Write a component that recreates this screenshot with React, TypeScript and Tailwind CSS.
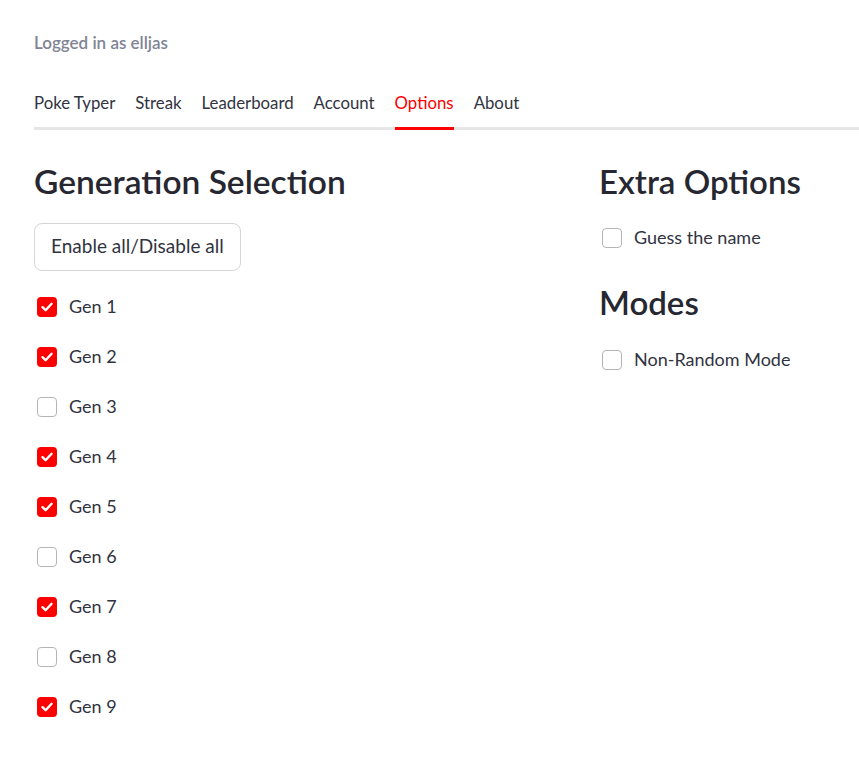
import React, { useState } from "react";

const tabs = ["Poke Typer", "Streak", "Leaderboard", "Account", "Options", "About"];

// Checkbox row in the Streamlit look
const Check: React.FC<{ label: string; checked: boolean; onToggle: () => void }> = ({
  label,
  checked,
  onToggle,
}) => (
  <label className="flex h-[50px] cursor-pointer items-center" onClick={onToggle}>
    <span
      className={
        checked
          ? "ml-[3px] flex h-5 w-5 items-center justify-center rounded-[4px] bg-[#ff0000]"
          : "ml-[3px] flex h-5 w-5 items-center justify-center rounded-[4px] border border-[#b5b5b5] bg-white"
      }
    >
      {checked && (
        <svg width="14" height="14" viewBox="0 0 14 14" fill="none">
          <path d="M2.5 7.2 5.6 10.2 11.6 3.8" stroke="white" strokeWidth="2.4" strokeLinecap="round" strokeLinejoin="round" />
        </svg>
      )}
    </span>
    <span className="ml-3 text-[18px] text-[#31333f]">{label}</span>
  </label>
);

export default function App() {
  const [gens, setGens] = useState([true, true, false, true, true, false, true, false, true]);
  const [guess, setGuess] = useState(false);
  const [nonRandom, setNonRandom] = useState(false);

  const toggleGen = (i: number) => setGens(gens.map((g, j) => (j === i ? !g : g)));
  const toggleAll = () => {
    const all = gens.every((g) => g);
    setGens(gens.map(() => !all));
  };

  return (
    <div className="min-h-screen overflow-hidden bg-white pl-[34px] pt-[30px]" style={{ fontFamily: "Lato, 'Noto Sans', sans-serif" }}>
      <p className="text-[17px] font-semibold text-[#808495]">Logged in as elljas</p>

      {/* tab bar */}
      <div className="mt-[34px] flex gap-5 border-b-[3px] border-[#e6e6e6]">
        {tabs.map((t) => (
          <div
            key={t}
            className={
              t === "Options"
                ? "-mb-[3px] border-b-[3px] border-[#ff0000] pb-[12px] text-[16.8px] text-[#ff0000]"
                : "-mb-[3px] border-b-[3px] border-transparent pb-[12px] text-[16.8px] text-[#31333f]"
            }
          >
            {t}
          </div>
        ))}
      </div>

      <div className="flex">
        <div className="w-[565px]">
          <h2 className="mt-[31px] text-[33.5px] font-semibold leading-[40px] text-[#262730]">Generation Selection</h2>
          <button
            onClick={toggleAll}
            className="mt-[22px] h-[48px] rounded-[8px] border border-[#d6d6d9] bg-white px-4 text-[19px] text-[#31333f]"
          >
            Enable all/Disable all
          </button>
          <div className="mt-[11px]">
            {gens.map((g, i) => (
              <Check key={i} label={`Gen ${i + 1}`} checked={g} onToggle={() => toggleGen(i)} />
            ))}
          </div>
        </div>
        <div>
          <h2 className="mt-[31px] text-[33px] font-semibold leading-[40px] text-[#262730]">Extra Options</h2>
          <div className="mt-[12px]">
            <Check label="Guess the name" checked={guess} onToggle={() => setGuess(!guess)} />
          </div>
          <h2 className="mt-[19px] text-[33px] font-semibold leading-[40px] text-[#262730]">Modes</h2>
          <div className="mt-[13px]">
            <Check label="Non-Random Mode" checked={nonRandom} onToggle={() => setNonRandom(!nonRandom)} />
          </div>
        </div>
      </div>
    </div>
  );
}
